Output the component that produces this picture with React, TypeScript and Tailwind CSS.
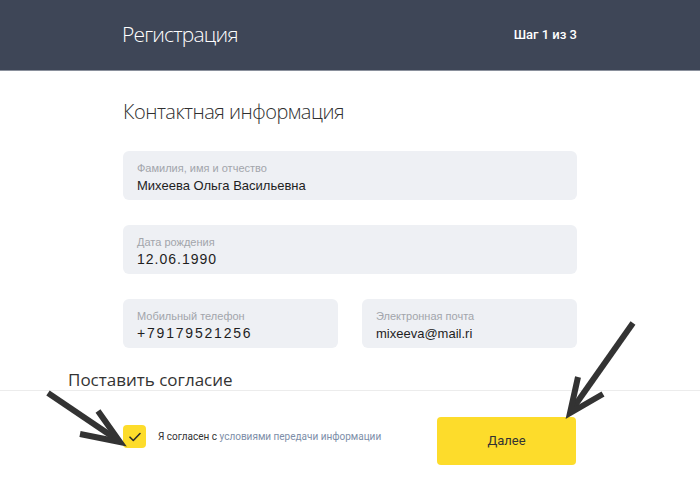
import React from "react";

function Field({
  label,
  value,
  className = "",
  valueClass = "text-[13px]",
}: {
  label: string;
  value: string;
  className?: string;
  valueClass?: string;
}) {
  return (
    <div className={`flex h-[49px] flex-col justify-center rounded-md bg-[#eef0f4] px-[14px] pt-[4px] ${className}`}>
      <span className="text-[11px] leading-[13px] text-[#a2a5ab]">{label}</span>
      <span className={`mt-[2px] leading-[17px] text-[#1e1e1e] ${valueClass}`}>{value}</span>
    </div>
  );
}

export default function App() {
  return (
    <div className="relative h-[490px] w-[700px] overflow-hidden bg-white font-['Liberation_Sans',Arial,sans-serif]">
      {/* Header */}
      <header className="flex h-[71px] items-center justify-between border-b border-[#8a909c] bg-[#3e4657] pl-[122px] pr-[123px]">
        <h1 className="font-['Open_Sans',sans-serif] text-[21px] font-light tracking-[-0.8px] text-white">
          Регистрация
        </h1>
        <span className="font-['Roboto',sans-serif] text-[13px] font-medium text-white">Шаг 1 из 3</span>
      </header>

      {/* Form */}
      <main className="flex flex-col px-[123px] pt-[26px]">
        <h2 className="font-['Open_Sans',sans-serif] text-[20px] font-light leading-[30px] tracking-[-0.5px] text-[#2f2f2f]">
          Контактная информация
        </h2>
        <div className="mt-[24px] flex flex-col gap-[25px]">
          <Field label="Фамилия, имя и отчество" value="Михеева Ольга Васильевна" />
          <Field label="Дата рождения" value="12.06.1990" valueClass="text-[14px] tracking-[1px]" />
          <div className="flex gap-[24px]">
            <Field
              label="Мобильный телефон"
              value="+79179521256"
              className="flex-1"
              valueClass="text-[14px] tracking-[1.8px]"
            />
            <Field label="Электронная почта" value="mixeeva@mail.ri" className="flex-1" />
          </div>
        </div>
      </main>

      {/* Consent */}
      <section className="mt-[21px] border-b border-[#ececec] pl-[68px]">
        <h3 className="font-['Open_Sans',sans-serif] text-[17px] leading-[21px] text-[#333]">Поставить согласие</h3>
      </section>
      <div className="mt-[26px] flex items-start justify-between pl-[123px] pr-[124px]">
        <label className="mt-[8px] flex items-center gap-[12px]">
          <span className="flex h-[23px] w-[23px] items-center justify-center rounded-[4px] bg-[#fddc2b]">
            <svg width="12" height="10" viewBox="0 0 12 10" fill="none">
              <path d="M1 5.2l3.3 3.3L11 1.5" stroke="#2b2b2b" strokeWidth="1.6" strokeLinecap="round" strokeLinejoin="round" />
            </svg>
          </span>
          <span className="font-['Roboto',sans-serif] text-[10px] text-[#333]">
            Я согласен с <span className="text-[#7d8ea8]">условиями передачи информации</span>
          </span>
        </label>
        <button className="flex h-[48px] w-[139px] items-center justify-center rounded-[4px] bg-[#fddc2b] font-['Roboto',sans-serif] text-[13px] text-[#333]">
          Далее
        </button>
      </div>

      {/* Annotation arrows */}
      <svg className="pointer-events-none absolute left-0 top-0" width="700" height="490" viewBox="0 0 700 490">
        <g stroke="#333" strokeWidth="6" strokeLinecap="butt" strokeLinejoin="miter" fill="none">
          <path d="M48 393 L119 441" />
          <path d="M98 411 L120 442 L80 434" />
          <path d="M633 323 L571 411" />
          <path d="M578 377 L570 413 L603 394" />
        </g>
      </svg>
    </div>
  );
}
